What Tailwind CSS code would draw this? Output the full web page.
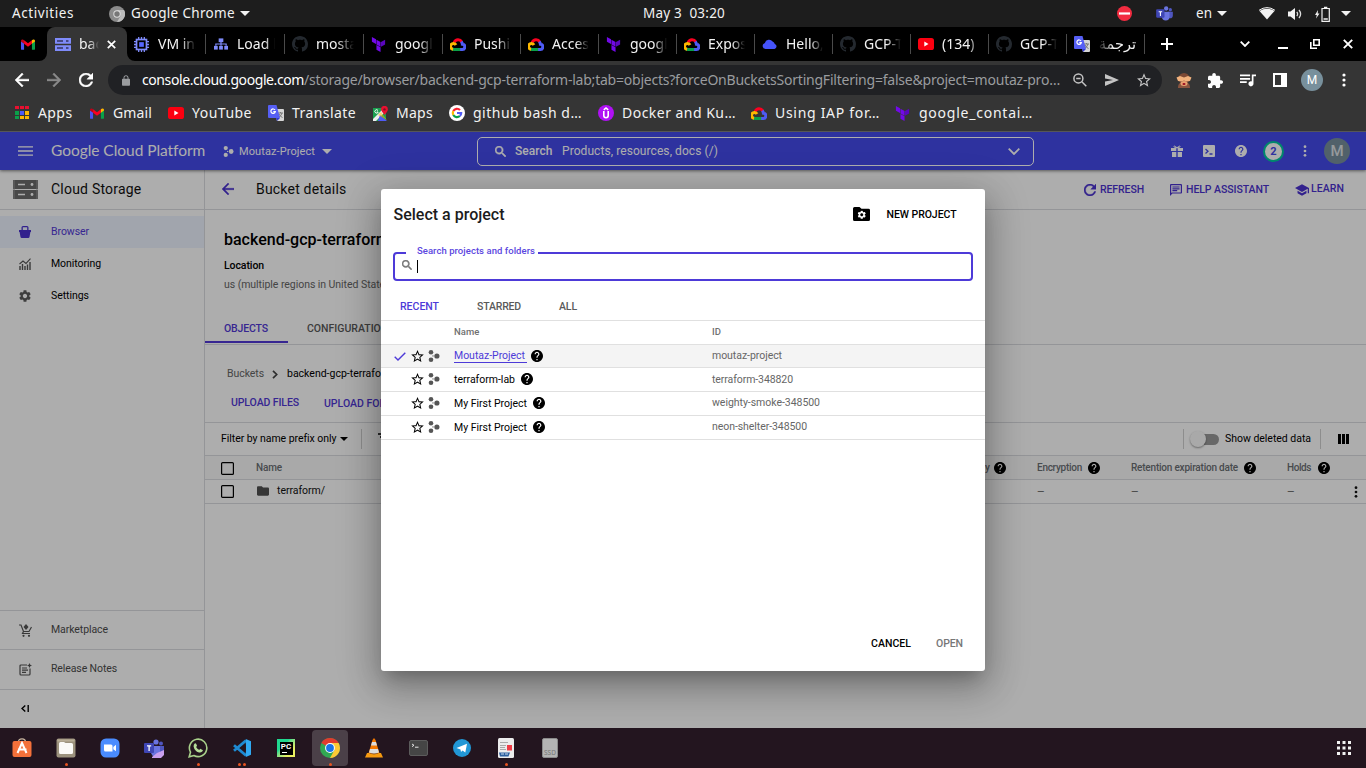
<!DOCTYPE html>
<html lang="en">
<head>
<meta charset="utf-8">
<title>Select a project</title>
<script src="https://cdn.jsdelivr.net/npm/@tailwindcss/browser@4"></script>
</head>
<body class="w-[1366px] h-[768px] overflow-hidden bg-black whitespace-nowrap">
<svg width="0" height="0" class="absolute">
  <symbol id="help" viewBox="2 2 20 20"><path fill="currentColor" d="M12 2C6.48 2 2 6.48 2 12s4.48 10 10 10 10-4.48 10-10S17.52 2 12 2zm1 17h-2v-2h2v2zm2.07-7.75l-.9.92C13.45 12.9 13 13.5 13 15h-2v-.5c0-1.1.45-2.1 1.17-2.83l1.24-1.26c.37-.36.59-.86.59-1.41 0-1.1-.9-2-2-2s-2 .9-2 2H8c0-2.21 1.79-4 4-4s4 1.79 4 4c0 .88-.36 1.68-.93 2.25z"/></symbol>
  <symbol id="star" viewBox="2 2 20 19"><path fill="currentColor" d="M22 9.24l-7.19-.62L12 2 9.19 8.63 2 9.24l5.46 4.73L5.82 21 12 17.27 18.18 21l-1.63-7.03L22 9.24zM12 15.4l-3.76 2.27 1-4.28-3.32-2.88 4.38-.38L12 6.1l1.71 4.04 4.38.38-3.32 2.88 1 4.28L12 15.4z"/></symbol>
  <symbol id="gear" viewBox="2 2 20 20"><path fill="currentColor" d="M19.14 12.94c.04-.3.06-.61.06-.94 0-.32-.02-.64-.07-.94l2.03-1.58c.18-.14.23-.41.12-.61l-1.92-3.32c-.12-.22-.37-.29-.59-.22l-2.39.96c-.5-.38-1.03-.7-1.62-.94l-.36-2.54c-.04-.24-.24-.41-.48-.41h-3.84c-.24 0-.43.17-.47.41l-.36 2.54c-.59.24-1.13.57-1.62.94l-2.39-.96c-.22-.08-.47 0-.59.22L2.74 8.87c-.12.21-.08.47.12.61l2.03 1.58c-.05.3-.09.63-.09.94s.02.64.07.94l-2.03 1.58c-.18.14-.23.41-.12.61l1.92 3.32c.12.22.37.29.59.22l2.39-.96c.5.38 1.03.7 1.62.94l.36 2.54c.05.24.24.41.48.41h3.84c.24 0 .44-.17.47-.41l.36-2.54c.59-.24 1.13-.56 1.62-.94l2.39.96c.22.08.47 0 .59-.22l1.92-3.32c.12-.22.07-.47-.12-.61l-2.01-1.58zM12 15.6c-1.98 0-3.6-1.62-3.6-3.6s1.62-3.6 3.6-3.6 3.6 1.62 3.6 3.6-1.62 3.6-3.6 3.6z"/></symbol>
  <symbol id="search" viewBox="3 3 17.5 17.5"><path fill="currentColor" stroke="currentColor" stroke-width=".9" d="M15.5 14h-.79l-.28-.27C15.41 12.59 16 11.11 16 9.5 16 5.91 13.09 3 9.5 3S3 5.91 3 9.5 5.91 16 9.5 16c1.61 0 3.09-.59 4.23-1.57l.27.28v.79l5 4.99L20.49 19l-4.99-5zm-6 0C7.01 14 5 11.99 5 9.5S7.01 5 9.5 5 14 7.01 14 9.5 11.99 14 9.5 14z"/></symbol>
  <symbol id="back" viewBox="4 4 16 16"><path fill="currentColor" stroke="currentColor" stroke-width=".5" d="M20 11H7.83l5.59-5.59L12 4l-8 8 8 8 1.41-1.41L7.83 13H20v-2z"/></symbol>
  <symbol id="reload" viewBox="4 4 16 16"><path fill="currentColor" stroke="currentColor" stroke-width=".5" d="M17.65 6.35C16.2 4.9 14.21 4 12 4c-4.42 0-7.99 3.58-7.99 8s3.57 8 7.99 8c3.73 0 6.84-2.55 7.73-6h-2.08c-.82 2.33-3.04 4-5.65 4-3.31 0-6-2.69-6-6s2.69-6 6-6c1.66 0 3.14.69 4.22 1.78L13 11h7V4l-2.35 2.35z"/></symbol>
  <symbol id="folder" viewBox="2 4 20 16"><path fill="currentColor" d="M10 4H4c-1.1 0-1.99.9-1.99 2L2 18c0 1.1.9 2 2 2h16c1.1 0 2-.9 2-2V8c0-1.1-.9-2-2-2h-8l-2-2z"/></symbol>
  <symbol id="tri" viewBox="0 0 10 5"><path fill="currentColor" d="M0 0h10L5 5z"/></symbol>
  <symbol id="project" viewBox="0 0 12 12"><g fill="currentColor"><circle cx="3" cy="2.3" r="2.300"/><circle cx="3" cy="9.700" r="2.300"/><circle cx="8.900" cy="6" r="2.600"/><circle cx="5" cy="5.900" r=".7"/></g></symbol>
  <symbol id="github" viewBox="0 0 16 16"><path fill="#24292f" d="M8 0C3.58 0 0 3.58 0 8c0 3.54 2.29 6.53 5.47 7.59.4.07.55-.17.55-.38 0-.19-.01-.82-.01-1.49-2.01.37-2.53-.49-2.69-.94-.09-.23-.48-.94-.82-1.13-.28-.15-.68-.52-.01-.53.63-.01 1.08.58 1.23.82.72 1.21 1.87.87 2.33.66.07-.52.28-.87.51-1.07-1.78-.2-3.64-.89-3.64-3.95 0-.87.31-1.59.82-2.15-.08-.2-.36-1.02.08-2.12 0 0 .67-.21 2.2.82.64-.18 1.32-.27 2-.27.68 0 1.36.09 2 .27 1.53-1.04 2.2-.82 2.2-.82.44 1.1.16 1.92.08 2.12.51.56.82 1.27.82 2.15 0 3.07-1.87 3.75-3.65 3.95.29.25.54.73.54 1.48 0 1.07-.01 1.93-.01 2.2 0 .21.15.46.55.38A8.013 8.013 0 0016 8c0-4.42-3.58-8-8-8z"/></symbol>
  <symbol id="terraform" viewBox="0 0 24 24"><path fill="#7209e8" d="M1.44 0v7.575l6.561 3.79V3.787zM8.72 4.23v7.575l6.561 3.787V8.018zm0 8.405v7.575L15.28 24v-7.578z"/><path fill="#5a06bd" d="M22.56 4.227l-6.561 3.791v7.574l6.56-3.787z"/></symbol>
  <symbol id="gmail" viewBox="0 0 16 12"><path fill="#4a52f0" d="M0 2l3.500 2.600V12H1a1 1 0 0 1-1-1z"/><path fill="#0aa04a" d="M12.500 4.600L16 2v9a1 1 0 0 1-1 1h-2.500z"/><path fill="#fb0020" d="M3.500 1L8 4.500 12.500 1v4.200L8 8.600 3.500 5.200z"/><path fill="#c00018" d="M0 2C0 .3 2-.2 3.500 1v4.200L0 2.600z"/><path fill="#fdb800" d="M16 2C16 .3 14-.2 12.500 1v4.200L16 2.600z"/></symbol>
  <symbol id="gcp" viewBox="0 0 16 13"><g fill="none" stroke-width="3"><path stroke="#fb0020" d="M4.200 4.300A4.300 4.300 0 0 1 11.800 4"/><path stroke="#4f5bf5" d="M11.300 3.600Q12.400 5 12.400 6.200A2.600 2.600 0 0 1 12 11.400H9.500"/><path stroke="#0aa04a" d="M10.200 11.400H4Q3 11.400 2.400 10.900"/><path stroke="#fdb800" d="M3.100 11.200A2.900 2.900 0 1 1 6 7"/></g></symbol>
  <symbol id="youtube" viewBox="0 0 16 12"><rect width="16" height="12" rx="2.600" fill="#fb0010"/><path fill="#fff" d="M6.300 3.500v5L10.500 6z"/></symbol>
  <symbol id="translate" viewBox="0 0 16 16"><path fill="#d5d5d5" d="M6 4h9a1 1 0 0 1 1 1v10a1 1 0 0 1-1 1H9z"/><path stroke="#777" fill="none" d="M10 8h5M12.500 7v1M14 8q-.8 3-3.500 4.500M11 9q1 2.500 3.500 3.500"/><path fill="#565ff5" d="M1 0h7.500L12 13H1a1 1 0 0 1-1-1V1a1 1 0 0 1 1-1z"/><path fill="#343bd0" d="M8 13h4l-3 3z"/><path stroke="#fff" fill="none" stroke-width="1.200" d="M7 5A2.200 2.200 0 1 0 7.300 6.600H5.300"/></symbol>
  <symbol id="teams" viewBox="0 0 20 18"><circle cx="12" cy="3" r="2.600" fill="#6a74e0"/><circle cx="17" cy="4.500" r="2" fill="#4f56c0"/><path fill="#4f56c0" d="M14 7h6v5a3 3 0 0 1-5 2z"/><path fill="#6a74e0" d="M7 7h9v6a4.500 4.500 0 0 1-9 0z"/><rect y="4" width="10" height="10" rx="1" fill="#3f46b4"/><path d="M3 6.800h4.200M5.100 7v5" stroke="#fff" stroke-width="1.300"/></symbol>
  <symbol id="chk" viewBox="0 0 13 13"><rect x=".6" y=".6" width="11.800" height="11.800" rx="1" fill="none" stroke="currentColor" stroke-width="1.200"/></symbol>
  <symbol id="kebab" viewBox="0 0 4 14"><g fill="currentColor"><circle cx="2" cy="2" r="1.600"/><circle cx="2" cy="7" r="1.600"/><circle cx="2" cy="12" r="1.600"/></g></symbol>
</svg>

<div class="relative flex flex-col w-[1366px] h-[768px] font-['Noto_Sans',sans-serif] text-[#f2f2f2]">

  <!-- desktop top bar -->
  <div class="flex items-center h-[27px] bg-[#1d1d1d] text-[13.500px] leading-none">
    <div class="pl-3 w-[109px]"><span data-w="62">Activities</span></div>
    <div class="w-[22px]"><svg class="size-4" viewBox="0 0 16 16"><circle cx="8" cy="8" r="8" fill="#8b8b8b"/><path d="M8 4h7A8 8 0 0 1 8 16l3.500-6z" fill="#bdbdbd"/><circle cx="8" cy="8" r="3.700" fill="#ddd"/><circle cx="8" cy="8" r="2.700" fill="#777"/></svg></div>
    <div class="w-[109px]"><span data-w="104">Google Chrome</span></div>
    <svg class="w-[10px] h-[5px]"><use href="#tri"/></svg>
    <div class="ml-[393px] w-[474px] whitespace-pre"><span data-w="82">May 3  03:20</span></div>
    <div class="w-[39px]"><svg class="size-[15px]" viewBox="0 0 15 15"><circle cx="7.500" cy="7.500" r="7.500" fill="#f22c40"/><path d="M2 7.500h11" stroke="#fff" stroke-width="2.200"/></svg></div>
    <div class="w-[40px]"><svg class="w-[17px] h-[15px]"><use href="#teams"/></svg></div>
    <div class="w-[21px]"><span data-w="16">en</span></div>
    <div class="w-[42px]"><svg class="w-[10px] h-[5px]"><use href="#tri"/></svg></div>
    <div class="w-[29px]"><svg class="w-4 h-[13px]" viewBox="0 0 16 13"><path fill="#f2f2f2" d="M.5 4L8 12.500 15.500 4Q12 1.800 8 1.800T.5 4z"/><path d="M0 3.300Q4 .6 8 .6t8 2.700" stroke="#f2f2f2" fill="none"/></svg></div>
    <div class="w-[27px]"><svg class="w-[14px] h-[14px]" viewBox="0 0 14 14"><path fill="#f2f2f2" d="M0 4.500h2.500L7 1v12L2.500 9.500H0z"/><path d="M8.800 4.800q1.600 2.200 0 4.400M11 3q3.200 4 0 8" fill="none" stroke="#ddd" stroke-width="1.300"/></svg></div>
    <div class="w-[26px]"><svg class="w-[16px] h-[16px]" viewBox="0 0 16 16"><path fill="#f2f2f2" d="M3 4L0 9h1.800L1 12.500 4.500 7.500H2.700z"/><path d="M7 2.500h7.300v12.800H7zM9 1.300h3.300" fill="none" stroke="#f2f2f2" stroke-width="1.200"/><path d="M8.500 13h4.300" stroke="#f2f2f2" stroke-width="1.500"/></svg></div>
    <svg class="w-[10px] h-[5px]"><use href="#tri"/></svg>
  </div>

  <!-- browser tabs -->
  <div class="flex items-center h-[34px] bg-black text-[14px] leading-none">
    <div class="w-[47px] pl-[21px]"><svg class="w-[14px] h-[11px]"><use href="#gmail"/></svg></div>
    <div class="relative flex items-center w-20 h-full bg-[#353535] rounded-t-lg pl-2">
      <svg class="absolute -left-2 bottom-0 size-2" viewBox="0 0 8 8"><path fill="#353535" d="M8 0v8H0a8 8 0 0 0 8-8z"/></svg>
      <svg class="absolute -right-2 bottom-0 size-2" viewBox="0 0 8 8"><path fill="#353535" d="M0 0v8h8a8 8 0 0 1-8-8z"/></svg>
      <svg class="w-4 h-[13px]" viewBox="0 0 16 13"><path fill="#7f8bfa" d="M0 0h16v5.800H0zM0 7.200h16V13H0z"/><path d="M2 3h6M2 10h6M11 3h2.500M11 10h2.500" stroke="#353560" stroke-width="1.400"/></svg>
      <div class="ml-2 w-[20px] overflow-hidden leading-5 [mask-image:linear-gradient(to_right,#000_50%,transparent)]">backend</div>
      <svg class="ml-2 size-[9px]" viewBox="0 0 9 9"><path d="M.8.8l7.400 7.400M8.200.8L.8 8.200" stroke="#fff" stroke-width="1.700"/></svg>
    </div>
    <div class="flex items-center w-[79px] h-5 border-r border-[#4a4a4a] pl-[7px]"><svg class="size-[15px]" viewBox="0 0 16 16"><g fill="none" stroke="#7f8bfa"><rect x="2.700" y="2.700" width="10.600" height="10.600" stroke-width="1.800"/><path stroke-width="1.400" d="M5 0v3M8 0v3M11 0v3M5 13v3M8 13v3M11 13v3M0 5h3M0 8h3M0 11h3M13 5h3M13 8h3M13 11h3"/></g><rect x="5.500" y="5.500" width="5" height="5" fill="#5566ff"/></svg><div class="ml-[9px] w-[38px] overflow-hidden leading-5 [mask-image:linear-gradient(to_right,#000_60%,transparent)]">VM instances</div></div>
    <div class="flex items-center w-[79px] h-5 border-r border-[#4a4a4a] pl-[8px]"><svg class="w-[14px] h-3" viewBox="0 0 15 12"><g fill="#7f8bfa"><rect x="5" width="5" height="4"/><rect y="8" width="4" height="4"/><rect x="5.500" y="8" width="4" height="4"/><rect x="11" y="8" width="4" height="4"/></g><path d="M7.500 3v5M2 8V6h11v2" fill="none" stroke="#7f8bfa" stroke-width="1.300"/></svg><div class="ml-[9px] w-[38px] overflow-hidden leading-5 [mask-image:linear-gradient(to_right,#000_75%,transparent)]">Load balancing</div></div>
    <div class="flex items-center w-[79px] h-5 border-r border-[#4a4a4a] pl-[7px]"><svg class="size-4"><use href="#github"/></svg><div class="ml-2 w-[38px] overflow-hidden leading-5 [mask-image:linear-gradient(to_right,#000_55%,transparent)]">mostafa</div></div>
    <div class="flex items-center w-[79px] h-5 border-r border-[#4a4a4a] pl-[7px]"><svg class="size-[15px]"><use href="#terraform"/></svg><div class="ml-[9px] w-[38px] overflow-hidden leading-5 [mask-image:linear-gradient(to_right,#000_65%,transparent)]">google_con</div></div>
    <div class="flex items-center w-[78px] h-5 border-r border-[#4a4a4a] pl-[7px]"><svg class="w-4 h-[13px]"><use href="#gcp"/></svg><div class="ml-2 w-[37px] overflow-hidden leading-5 [mask-image:linear-gradient(to_right,#000_65%,transparent)]">Pushing</div></div>
    <div class="flex items-center w-[78px] h-5 border-r border-[#4a4a4a] pl-[7px]"><svg class="w-4 h-[13px]"><use href="#gcp"/></svg><div class="ml-2 w-[37px] overflow-hidden leading-5 [mask-image:linear-gradient(to_right,#000_65%,transparent)]">Access</div></div>
    <div class="flex items-center w-[78px] h-5 border-r border-[#4a4a4a] pl-[7px]"><svg class="size-[15px]"><use href="#terraform"/></svg><div class="ml-[9px] w-[37px] overflow-hidden leading-5 [mask-image:linear-gradient(to_right,#000_65%,transparent)]">google_con</div></div>
    <div class="flex items-center w-[78px] h-5 border-r border-[#4a4a4a] pl-[7px]"><svg class="w-4 h-[13px]"><use href="#gcp"/></svg><div class="ml-2 w-[37px] overflow-hidden leading-5 [mask-image:linear-gradient(to_right,#000_65%,transparent)]">Exposing</div></div>
    <div class="flex items-center w-[78px] h-5 border-r border-[#4a4a4a] pl-[7px]"><svg class="w-4 h-[10px]" viewBox="0 0 16 10"><path fill="#4553fa" d="M3.500 10a3 3 0 0 1-.6-5.900 4.300 4.300 0 0 1 7.700-1.500 3.600 3.600 0 0 1 2.200 2.400 2.600 2.600 0 0 1-.3 5z"/></svg><div class="ml-2 w-[37px] overflow-hidden leading-5 [mask-image:linear-gradient(to_right,#000_65%,transparent)]">Hello, Wo</div></div>
    <div class="flex items-center w-[78px] h-5 border-r border-[#4a4a4a] pl-[7px]"><svg class="size-4"><use href="#github"/></svg><div class="ml-2 w-[37px] overflow-hidden leading-5 [mask-image:linear-gradient(to_right,#000_60%,transparent)]">GCP-Terra</div></div>
    <div class="flex items-center w-[78px] h-5 border-r border-[#4a4a4a] pl-[7px]"><svg class="w-4 h-3"><use href="#youtube"/></svg><div class="ml-2 w-[37px] overflow-hidden leading-5 [mask-image:linear-gradient(to_right,#000_75%,transparent)]">(134) Go</div></div>
    <div class="flex items-center w-[78px] h-5 border-r border-[#4a4a4a] pl-[7px]"><svg class="size-4"><use href="#github"/></svg><div class="ml-2 w-[37px] overflow-hidden leading-5 [mask-image:linear-gradient(to_right,#000_60%,transparent)]">GCP-Terra</div></div>
    <div class="flex items-center w-[78px] h-5 border-r border-[#4a4a4a] pl-[7px]"><svg class="size-4"><use href="#translate"/></svg><div dir="rtl" class="ml-2 w-[38px] overflow-hidden leading-5 text-[14.500px] font-['DejaVu_Sans',sans-serif] [mask-image:linear-gradient(to_left,#000_60%,transparent)]">ترجمة</div></div>
    <svg class="ml-[16px] size-3" viewBox="0 0 12 12"><path d="M6 0v12M0 6h12" stroke="#fff" stroke-width="2"/></svg>
    <svg class="ml-[67px] w-[10px] h-[6px]" viewBox="0 0 10 6"><path d="M.7.7L5 5 9.300.7" fill="none" stroke="#fff" stroke-width="1.800"/></svg>
    <svg class="ml-[28px] mt-2 w-[10px] h-[2px]" viewBox="0 0 10 2"><path fill="#fff" d="M0 0h10v2H0z"/></svg>
    <svg class="ml-[22px] size-[10px]" viewBox="0 0 10 10"><path d="M3.800.8h5.400v5.400H3.800z" fill="none" stroke="#fff" stroke-width="1.600"/><path d="M.8 3v6.200H7" fill="none" stroke="#fff" stroke-width="1.600"/></svg>
    <svg class="ml-[23px] size-[10px]" viewBox="0 0 10 10"><path d="M.8.8l8.400 8.400M9.200.8L.8 9.200" stroke="#fff" stroke-width="1.900"/></svg>
  </div>

  <!-- address bar -->
  <div class="flex items-center h-[38px] bg-[#353535] pl-[15px] text-[14px] leading-none">
    <svg class="size-[14px] text-white"><use href="#back"/></svg>
    <svg class="ml-[18px] size-[14px] text-[#8a8a8a] rotate-180"><use href="#back"/></svg>
    <svg class="ml-[18px] size-[14px] text-white"><use href="#reload"/></svg>
    <div class="ml-[15px] flex items-center w-[1054px] h-[30px] rounded-full bg-[#202124] pl-[14px] text-[#9a9c9f]">
      <svg class="w-[8px] h-[11px]" viewBox="4 1 16 21"><path fill="currentColor" d="M18 8h-1V6c0-2.760-2.240-5-5-5S7 3.240 7 6v2H6c-1.100 0-2 .9-2 2v10c0 1.100.9 2 2 2h12c1.100 0 2-.9 2-2V10c0-1.100-.9-2-2-2zM15.100 8H8.900V6c0-1.710 1.390-3.100 3.100-3.100s3.100 1.390 3.100 3.100v2z"/></svg>
      <div class="ml-3 w-[931px] leading-5"><span class="text-white" data-w="162">console.cloud.google.com</span><span data-w="756">/storage/browser/backend-gcp-terraform-lab;tab=objects?forceOnBucketsSortingFiltering=false&amp;project=moutaz-pro…</span></div>
      <svg class="size-[14px] text-[#c4c4c4]" viewBox="0 0 14 14"><circle cx="5.400" cy="5.400" r="4.500" fill="none" stroke="currentColor" stroke-width="1.500"/><path d="M8.800 8.800l4.500 4.500M3.200 5.400h4.400" stroke="currentColor" stroke-width="1.500"/></svg>
      <svg class="ml-[18px] w-[14px] h-3 text-[#c4c4c4]" viewBox="0 0 14 12"><path fill="currentColor" d="M0 0l14 6L0 12V7.500L8 6 0 4.500z"/></svg>
      <svg class="ml-[18px] w-[14px] h-[14px] text-[#c4c4c4]"><use href="#star"/></svg>
    </div>
    <svg class="ml-[14px] w-4 h-4" viewBox="0 0 16 16"><circle cx="8" cy="6.500" r="5.500" fill="#7d4a35"/><path fill="#8a5540" d="M2 16q0-5 3-5h6q3 0 3 5z"/><path fill="#f2b27d" d="M.5 5.500L4 4l4 1.500L12 4l3.500 1.500L14 9l-4 .5L8 8.500 6 9.500 2 9z"/><ellipse cx="8" cy="11.500" rx="3.500" ry="2.500" fill="#e8a070"/><rect x="6.500" y="11" width="3" height="2" rx="1" fill="#a01525"/></svg>
    <svg class="ml-[16px] size-[15px]" viewBox="2 1 21 21"><path fill="#fff" d="M20.500 11H19V7c0-1.100-.9-2-2-2h-4V3.500C13 2.120 11.880 1 10.500 1S8 2.120 8 3.500V5H4c-1.100 0-1.990.9-1.990 2v3.800H3.500c1.490 0 2.700 1.210 2.700 2.700s-1.210 2.700-2.700 2.700H2V20c0 1.100.9 2 2 2h3.800v-1.500c0-1.490 1.210-2.700 2.700-2.700 1.490 0 2.700 1.210 2.700 2.700V22H17c1.100 0 2-.9 2-2v-4h1.500c1.380 0 2.500-1.120 2.500-2.500S21.880 11 20.500 11z"/></svg>
    <svg class="ml-[17px] w-4 h-[13px]" viewBox="3 6 19 14"><path fill="#fff" d="M15 6H3v2h12V6zm0 4H3v2h12v-2zM3 16h8v-2H3v2zM17 6v8.180c-.31-.11-.65-.18-1-.18-1.660 0-3 1.340-3 3s1.340 3 3 3 3-1.340 3-3V8h3V6h-5z"/></svg>
    <svg class="ml-[17px] size-[14px]" viewBox="0 0 14 14"><path fill="#fff" fill-rule="evenodd" d="M0 0h14v14H0zM2 2v10h6V2z"/></svg>
    <div class="ml-[14px] size-[22px] rounded-full bg-[#78909c] text-white text-[12px] flex items-center justify-center font-['Roboto',sans-serif]">M</div>
    <svg class="ml-[19px] w-1 h-[14px] text-white"><use href="#kebab"/></svg>
  </div>

  <!-- bookmarks -->
  <div class="flex items-center h-[33px] pb-[4px] bg-[#353535] border-b border-[#565656] pl-[15px] text-[14px] leading-none">
    <div class="w-[23px]"><svg class="size-[14px]" viewBox="0 0 14 14"><path fill="#e81030" d="M0 0h4v3H0zM5 0h4v3H5zM10 0h4v3h-4z"/><path fill="#0aa04a" d="M0 5h4v4H0zM0 10h4v3H0z"/><path fill="#4f5bf5" d="M5 5h4v4H5z"/><path fill="#fdb800" d="M10 5h4v4h-4zM5 10h4v3H5zM10 10h4v3h-4z"/></svg></div>
    <div class="w-[52px]"><span data-w="34.500">Apps</span></div>
    <div class="w-[23px]"><svg class="w-[14px] h-[11px]"><use href="#gmail"/></svg></div>
    <div class="w-[55px]"><span data-w="39">Gmail</span></div>
    <div class="w-6"><svg class="w-4 h-3"><use href="#youtube"/></svg></div>
    <div class="w-[76px]"><span data-w="60">YouTube</span></div>
    <div class="w-6"><svg class="size-4"><use href="#translate"/></svg></div>
    <div class="w-[81px]"><span data-w="64">Translate</span></div>
    <div class="w-[23px]"><svg class="w-[15px] h-[15px]" viewBox="0 0 15 15"><path fill="#1aa050" d="M0 2h13v13H0z"/><path fill="#eee" d="M0 13L11 2h2v3L3 15H0z"/><path fill="#4f5bf5" d="M7 9l7 6H5z"/><path fill="#fdb800" d="M5 9l3-3 6 8z" opacity=".5"/><path fill="#e81030" d="M11.500 9Q8 5 8 3.300a3.400 3.400 0 0 1 6.900 0Q15 5 11.500 9z"/><circle cx="11.500" cy="3.400" r="1.200" fill="#801020"/><path d="M5 4.500a1.700 1.700 0 1 0 .2 1.500H3.800" fill="none" stroke="#fff"/></svg></div>
    <div class="w-[53px]"><span data-w="37">Maps</span></div>
    <div class="w-6"><svg class="size-4" viewBox="0 0 16 16"><circle cx="8" cy="8" r="8" fill="#fff"/><g fill="none" stroke-width="2.200"><path stroke="#fb2030" d="M4.300 6A4.200 4.200 0 0 1 11 5"/><path stroke="#fdb800" d="M4.300 6a4.200 4.200 0 0 0 0 4"/><path stroke="#0aa04a" d="M4.300 10A4.200 4.200 0 0 0 10.800 11"/><path stroke="#4f5bf5" d="M8 8h4.200a4 4 0 0 1-1.400 3"/></g></svg></div>
    <div class="w-[125px]"><span data-w="109">github bash d…</span></div>
    <div class="w-6"><svg class="size-4" viewBox="0 0 16 16"><circle cx="8" cy="8" r="8" fill="#b010f5"/><path d="M5.800 6v4.500a2.200 2.200 0 0 0 4.400 0V6M5.800 4.800L8 3l2.200 1.800" fill="none" stroke="#fff" stroke-width="1.600"/></svg></div>
    <div class="w-[129px]"><span data-w="114">Docker and Ku…</span></div>
    <div class="w-6"><svg class="w-4 h-[13px]"><use href="#gcp"/></svg></div>
    <div class="w-[120px]"><span data-w="105">Using IAP for…</span></div>
    <div class="w-6"><svg class="size-[15px]"><use href="#terraform"/></svg></div>
    <div><span data-w="114">google_contai…</span></div>
  </div>

  <!-- web page -->
  <div class="relative flex flex-col h-[596px] bg-white text-black font-['Roboto',sans-serif] text-[10.500px] leading-none overflow-hidden">
    <div class="relative z-10 flex items-center h-[38px] shrink-0 bg-[#444aeb] text-white shadow-[0_1px_3px_rgba(0,0,0,0.5)] pl-[18px]">
      <svg class="w-[15px] h-[10px]" viewBox="0 0 15 10"><path d="M0 .8h15M0 5h15M0 9.200h15" stroke="#fff" stroke-width="1.300"/></svg>
      <div class="ml-[18px] w-[172px] text-[15.500px] font-['Lato',sans-serif]"><span data-w="154">Google Cloud Platform</span></div>
      <svg class="size-[11px]"><use href="#project"/></svg>
      <div class="ml-[5px] w-[83px] text-[11px]"><span data-w="76">Moutaz-Project</span></div>
      <svg class="w-[10px] h-[5px]"><use href="#tri"/></svg>
      <div class="ml-[145px] flex items-center w-[557px] h-[29px] border border-white rounded-[5px] pl-[17px] text-[12px]">
        <svg class="size-[11px]"><use href="#search"/></svg>
        <div class="ml-[9px] w-[47px] font-medium"><span data-w="37.500">Search</span></div>
        <div class="w-[446px]"><span data-w="156">Products, resources, docs (/)</span></div>
        <svg class="w-[12px] h-[7px]" viewBox="0 0 12 7"><path d="M.7.7L6 6 11.300.7" fill="none" stroke="#fff" stroke-width="1.800"/></svg>
      </div>
      <svg class="ml-[137px] size-3" viewBox="0 0 12 12"><path fill="#fff" d="M0 3h5.300v3H0zM6.700 3H12v3H6.700zM1 7h4.300v5H1zM6.700 7H11v5H6.700z"/><path d="M6 2.800Q3 3 3 1.500T6 2.800Q9 3 9 1.500T6 2.800z" fill="none" stroke="#fff"/></svg>
      <svg class="ml-[20px] size-3" viewBox="0 0 12 12"><rect width="12" height="12" rx="1" fill="#fff"/><path d="M2.500 4L5 6.200 2.500 8.500M6.500 9h3" fill="none" stroke="#444aeb" stroke-width="1.300"/></svg>
      <svg class="ml-[20px] size-3"><use href="#help"/></svg>
      <div class="ml-[16px] size-[21px] rounded-full border-2 border-[#00c8a0] bg-white text-[#444aeb] text-[11px] font-bold flex items-center justify-center">2</div>
      <svg class="ml-[19px] w-1 h-3"><use href="#kebab"/></svg>
      <div class="ml-[17px] size-[26px] rounded-full bg-[#78909c] flex items-center justify-center text-[15px] font-medium text-white/75">M</div>
    </div>
    <div class="flex h-[558px]">
      <!-- side navigation -->
      <div class="flex flex-col w-[205px] shrink-0 border-r border-[#dadce0]">
        <div class="flex items-center h-10 border-b border-[#dadce0] pl-[13px]">
          <svg class="w-[25px] h-[19px]" viewBox="0 0 25 19"><path fill="#6b6b6b" d="M0 0h25v9H0zM0 10h25v9H0z"/><path d="M5 4.500h7M5 14.500h7" stroke="#fff" stroke-width="1.600"/><circle cx="19" cy="4.500" r="1.400" fill="#fff"/><circle cx="19" cy="14.500" r="1.400" fill="#fff"/><path d="M1 0v19M24 0v19" stroke="#999"/></svg>
          <div class="ml-[13px] pb-[2px] text-[14px] text-[#111]"><span data-w="90.500">Cloud Storage</span></div>
        </div>
        <div class="mt-[6px] flex items-center h-8 bg-[#edf3ff] text-[#5238d6] pl-[19px]"><svg class="size-3" viewBox="0 0 12 12"><path fill="#4b32d0" d="M0 4h12v2h-.6L10.500 11q-.2 1-1.200 1H2.700q-1 0-1.200-1L.6 6H0zM2.500 4V1.500Q2.500 0 4 0h4q1.500 0 1.500 1.500V4H8.200V1.300H3.800V4z"/></svg><span class="ml-[20px]" data-w="38">Browser</span></div>
        <div class="flex items-center h-8 pl-[19px]"><svg class="size-3" viewBox="0 0 12 12"><path d="M.5 6l3.500-3 3 2.500L11.500.7" fill="none" stroke="#555" stroke-width="1.100"/><path d="M1 8v4M3.500 6v6M6 8v4M8.500 6.500V12M11 4v8" stroke="#555" stroke-width="1.400"/></svg><span class="ml-[20px]" data-w="50">Monitoring</span></div>
        <div class="flex items-center h-8 pl-[19px]"><svg class="size-3 text-[#5c5c5c]"><use href="#gear"/></svg><span class="ml-[20px]" data-w="38">Settings</span></div>
        <div class="mt-auto flex items-center h-[39px] border-t border-[#dadce0] pl-[19px] text-[#4c4c4c]"><svg class="size-[13px]" viewBox="0 0 13 13"><path d="M0 1h2l2.500 6.500h5.500L12.500 3M4.500 7.500L3.500 9.500h7.500" fill="none" stroke="#555" stroke-width="1.200"/><circle cx="4.500" cy="11.800" r="1.100" fill="#555"/><circle cx="10" cy="11.800" r="1.100" fill="#555"/><path fill="#555" d="M7 0l2.500 3L7 6 4.500 3z"/></svg><span class="ml-[19px]" data-w="57">Marketplace</span></div>
        <div class="flex items-center h-[40px] border-t border-[#dadce0] pl-[19px] text-[#4c4c4c]"><svg class="size-[13px]" viewBox="0 0 13 13"><path d="M8 2H2Q1 2 1 3v8q0 1 1 1h8q1 0 1-1V5.500M3 5h5M3 7.200h6M3 9.400h4" fill="none" stroke="#555" stroke-width="1.200"/><path fill="#555" d="M10.500 0l.8 1.700 1.700.8-1.700.8-.8 1.700-.8-1.700L8 2.500l1.700-.8z"/></svg><span class="ml-[19px]" data-w="66">Release Notes</span></div>
        <div class="flex items-center h-[39px] border-t border-[#dadce0] pl-[21px] pb-[2px]"><svg class="w-2 h-[7px]" viewBox="0 0 8 7"><path d="M4.300.5L1 3.500l3.300 3M7.200 0v7" fill="none" stroke="#000" stroke-width="1.400"/></svg></div>
      </div>
      <!-- bucket details -->
      <div class="flex flex-col w-[1161px]">
        <div class="flex items-center h-10 border-b border-[#dadce0] pl-[17px] text-[#4b32d0] font-medium shrink-0">
          <svg class="size-3 mb-[2px]"><use href="#back"/></svg>
          <div class="ml-[22px] pb-[2px] w-[828px] text-[14px] font-normal text-[#111]"><span data-w="90.500">Bucket details</span></div>
          <svg class="size-3"><use href="#reload"/></svg><div class="ml-1 w-[70px] pt-[1px]"><span data-w="44">REFRESH</span></div>
          <svg class="size-3" viewBox="2 2 20 20"><path fill="currentColor" d="M4 4h16v12H5.170L4 17.170V4m0-2c-1.100 0-1.990.9-1.990 2L2 22l4-4h14c1.100 0 2-.9 2-2V4c0-1.100-.9-2-2-2H4zm2 10h8v2H6v-2zm0-3h12v2H6V9zm0-3h12v2H6V6z"/></svg><div class="ml-1 w-[109px] pt-[1px]"><span data-w="83">HELP ASSISTANT</span></div>
          <svg class="w-[14px] h-3" viewBox="1 3 22 18"><path fill="currentColor" d="M5 13.180v4L12 21l7-3.820v-4L12 17l-7-3.820zM12 3L1 9l11 6 9-4.910V17h2V9L12 3z"/></svg><span class="ml-[2px] pb-[1px]" data-w="33">LEARN</span>
        </div>
        <div class="pl-[19px] pt-[22px] h-[98px] shrink-0">
          <div class="text-[16px] font-medium"><span>backend-gcp-terraform-lab</span></div>
          <div class="mt-[13px] font-medium"><span data-w="40">Location</span></div>
          <div class="mt-[8px] text-[#666]"><span class="tracking-[-.05px]">us (multiple regions in United States)</span></div>
        </div>
        <div class="flex h-[37px] border-b border-[#dadce0] font-medium text-[#5a5a5a] leading-[43px] shrink-0">
          <div class="w-[83px] h-[36px] border-b-2 border-[#5238d6] pl-[19px] text-[#5238d6] -mt-[1px]"><span data-w="44">OBJECTS</span></div>
          <div class="pl-[19px] -mt-[1px]"><span>CONFIGURATION</span></div>
        </div>
        <div class="flex items-center h-[57px] pt-[1px] pl-[22px] shrink-0"><span class="text-[#666]" data-w="37">Buckets</span><svg class="ml-2 w-[6px] h-[9px]" viewBox="0 0 6 9"><path d="M1 .8l3.700 3.700L1 8.200" fill="none" stroke="#444" stroke-width="1.700"/></svg><span class="ml-[9px]">backend-gcp-terraform-lab</span></div>
        <div class="flex h-[21px] pl-[26px] font-medium text-[#5238d6] border-b border-[#dadce0] shrink-0"><div class="w-[93px] -mt-[4px]"><span data-w="68">UPLOAD FILES</span></div><span class="-mt-[3px]">UPLOAD FOLDER</span></div>
        <div class="flex items-center h-[33px] pl-4 border-b border-[#dadce0] shrink-0">
          <div class="w-[119px]"><span data-w="115">Filter by name prefix only</span></div>
          <svg class="w-[8px] h-[4px]"><use href="#tri"/></svg>
          <div class="ml-[13px] w-px h-5 bg-[#d0d0d0]"></div>
          <svg class="ml-4 mb-1 w-3 h-2" viewBox="0 0 12 8"><path d="M0 1h12M2 4h8M4.500 7h3" stroke="#000" stroke-width="1.500"/></svg>
          <div class="ml-[793px] w-px h-5 bg-[#d0d0d0]"></div>
          <div class="ml-[6px] flex items-center"><div class="size-[16px] rounded-full bg-[#fafafa] shadow-[0_1px_2px_rgba(0,0,0,0.4)] z-10"></div><div class="-ml-[7px] w-5 h-[11px] rounded-full bg-[#9a9a9a]"></div></div>
          <div class="ml-[6px] w-[95px]"><span data-w="86">Show deleted data</span></div>
          <div class="w-px h-5 bg-[#d0d0d0]"></div>
          <svg class="ml-[17px] w-[11px] h-[10px]" viewBox="0 0 11 10"><path fill="#000" d="M0 0h3v10H0zM4 0h3v10H4zM8 0h3v10H8z"/></svg>
        </div>
        <div class="flex items-center h-6 pl-4 border-b border-[#dadce0] bg-[#fafafa] text-[#6b6f74] font-medium text-[10px] shrink-0">
          <svg class="size-[13px] text-black mt-px"><use href="#chk"/></svg><div class="ml-[22px] w-[722px]"><span data-w="26">Name</span></div>
          <div class="w-[16px] text-right pr-1">y</div><svg class="size-3 text-black"><use href="#help"/></svg>
          <div class="ml-[31px] w-[51px]"><span data-w="45">Encryption</span></div><svg class="size-3 text-black"><use href="#help"/></svg>
          <div class="ml-[31px] w-[113px]"><span data-w="107">Retention expiration date</span></div><svg class="size-3 text-black"><use href="#help"/></svg>
          <div class="ml-[31px] w-[31px]"><span data-w="24">Holds</span></div><svg class="size-3 text-black"><use href="#help"/></svg>
        </div>
        <div class="flex items-center h-6 pl-4 border-b border-[#dadce0] text-[#111] shrink-0">
          <svg class="size-[13px] text-black"><use href="#chk"/></svg><svg class="ml-[23px] mb-[2px] w-3 h-[10px] text-[#505050]"><use href="#folder"/></svg>
          <div class="ml-2 w-[760px] pb-px"><span data-w="48">terraform/</span></div>
          <div class="w-[94px] text-[#444] text-[9.500px]">—</div><div class="w-[156px] text-[#444] text-[9.500px]">—</div><div class="w-[67px] text-[#444] text-[9.500px]">—</div>
          <svg class="w-1 h-3"><use href="#kebab"/></svg>
        </div>
      </div>
    </div>

    <!-- dimmed backdrop and dialog -->
    <div class="absolute inset-0 z-20 bg-black/32"></div>
    <div class="absolute z-30 left-[381px] top-[57px] w-[604px] h-[482px] rounded-[3px] bg-white shadow-[0_11px_15px_-7px_rgba(0,0,0,.2),0_14px_34px_3px_rgba(0,0,0,.2),0_9px_42px_8px_rgba(0,0,0,.14)] flex flex-col">
      <div class="flex items-center h-[50px] pl-[12.500px] pt-px shrink-0">
        <div class="w-[459px] text-[16px] font-medium text-[#1c1c1c]"><span data-w="111">Select a project</span></div>
        <svg class="mb-px w-[17px] h-[14px]" viewBox="0 0 17 14"><path fill="#000" d="M1.500 0h5l2 1.800h7q1.500 0 1.500 1.400v9.300q0 1.500-1.500 1.500h-14Q0 14 0 12.500v-11Q0 0 1.500 0z"/><g color="#fff"><use href="#gear" x="4.500" y="3.500" width="8.500" height="8.500"/></g></svg>
        <div class="ml-[17px] pt-[1px] font-medium"><span data-w="70">NEW PROJECT</span></div>
      </div>
      <div class="relative mt-[13px] ml-3 flex items-center w-[580px] h-[29px] border-2 border-[#4d3ad8] rounded-[4px] pl-[7px] shrink-0">
        <div class="absolute left-[11px] -top-[9px] w-[132px] h-[12px] bg-white pl-[11px] pt-px text-[9.500px] font-medium text-[#5b47e0]"><span data-w="118">Search projects and folders</span></div>
        <svg class="size-[10px] mb-[3px] text-[#777]"><use href="#search"/></svg><div class="ml-[5px] w-px h-[13px] bg-black"></div>
      </div>
      <div class="flex items-center h-[40px] pt-[13px] pl-[19px] border-b border-[#e0e0e0] text-[#5a5a5a] font-medium shrink-0">
        <div class="w-[77px] text-[#4d3ad8]"><span data-w="39">RECENT</span></div><div class="w-[82px]"><span data-w="44">STARRED</span></div><span data-w="18">ALL</span>
      </div>
      <div class="flex items-center h-6 pb-[2px] pl-[73px] border-b border-[#e0e0e0] text-[#707070] font-medium text-[9.500px] shrink-0"><div class="w-[258px]"><span data-w="25.500">Name</span></div><span data-w="9">ID</span></div>
      <div class="flex items-center h-[23px] pl-[13px] border-b border-[#e0e0e0] bg-[#f4f4f4] shrink-0">
        <svg class="w-3 h-[9px]" viewBox="0 0 12 9"><path d="M.7 4.800L4 8 11.300.7" fill="none" stroke="#4d3ad8" stroke-width="1.400"/></svg>
        <svg class="ml-[5px] w-[13px] h-[12px]"><use href="#star"/></svg><svg class="ml-[4px] size-3 text-[#555]"><use href="#project"/></svg>
        <div class="ml-[14px] flex w-[258px] items-center"><span class="text-[#4d3ad8] border-b border-[#4d3ad8] pt-[2px] pb-[1px] w-[73px] h-[14px]"><span data-w="71">Moutaz-Project</span></span><svg class="ml-[4px] size-3"><use href="#help"/></svg></div>
        <span class="text-[#666]" data-w="70">moutaz-project</span>
      </div>
      <div class="flex items-center h-6 pl-[30px] pb-px border-b border-[#e0e0e0] shrink-0">
        <svg class="w-[13px] h-[12px]"><use href="#star"/></svg><svg class="ml-[4px] size-3 text-[#555]"><use href="#project"/></svg>
        <div class="ml-[14px] flex w-[258px] h-3 items-center"><span class="pt-[2px]" data-w="61">terraform-lab</span><svg class="ml-[6px] size-3"><use href="#help"/></svg></div>
        <span class="text-[#666] pt-[2px]" data-w="81">terraform-348820</span>
      </div>
      <div class="flex items-center h-6 pl-[30px] pb-px border-b border-[#e0e0e0] shrink-0">
        <svg class="w-[13px] h-[12px]"><use href="#star"/></svg><svg class="ml-[4px] size-3 text-[#555]"><use href="#project"/></svg>
        <div class="ml-[14px] flex w-[258px] h-3 items-center"><span class="pt-[2px]" data-w="73">My First Project</span><svg class="ml-[6px] size-3"><use href="#help"/></svg></div>
        <span class="text-[#666] pt-px" data-w="108">weighty-smoke-348500</span>
      </div>
      <div class="flex items-center h-6 pl-[30px] pb-px border-b border-[#e0e0e0] shrink-0">
        <svg class="w-[13px] h-[12px]"><use href="#star"/></svg><svg class="ml-[4px] size-3 text-[#555]"><use href="#project"/></svg>
        <div class="ml-[14px] flex w-[258px] h-3 items-center"><span class="pt-[2px]" data-w="73">My First Project</span><svg class="ml-[6px] size-3"><use href="#help"/></svg></div>
        <span class="text-[#666] pt-px" data-w="95">neon-shelter-348500</span>
      </div>
      <div class="mt-auto flex justify-end items-center h-[53px] pr-[22px] font-medium"><span data-w="40">CANCEL</span><span class="ml-[25px] text-[#777]" data-w="27">OPEN</span></div>
    </div>
  </div>

  <!-- dock -->
  <div class="flex items-center h-10 bg-[#23151f] pr-[15px]">
    <div class="relative flex items-center justify-center w-11 h-10"><svg class="size-5" viewBox="0 0 20 20"><path d="M6.500 4Q6.500.8 10 .8T13.500 4" fill="none" stroke="#c9b7a0" stroke-width="1.300"/><rect x=".5" y="3" width="19" height="16" rx="2" fill="#f4713a"/><path d="M5.500 15L10 5l4.500 10M6 11.500h8.500" fill="none" stroke="#fff" stroke-width="2"/></svg></div>
    <div class="relative flex items-center justify-center w-11 h-10"><svg class="size-5" viewBox="0 0 20 20"><rect x=".5" y=".5" width="19" height="19" rx="2" fill="#9c927d"/><rect x="1.500" y="1.500" width="17" height="2" fill="#b9ae97"/><path fill="#fbfaf7" d="M3 5.500Q3 4 4.500 4H8l1.500 1h6Q17 5 17 6.500v8q0 1.500-1.500 1.500h-11Q3 16 3 14.500z"/></svg><i class="absolute bottom-[2px] size-[3px] rounded-full bg-[#e95420]"></i></div>
    <div class="relative flex items-center justify-center w-11 h-10"><svg class="size-5" viewBox="0 0 20 20"><rect x=".5" y=".5" width="19" height="19" rx="5.500" fill="#4a8cff"/><path fill="#fff" d="M4 6.500h7q1.500 0 1.500 1.500v5.500h-7Q4 13.500 4 12zM13.300 9L16 6.800v6.500l-2.700-2z"/></svg></div>
    <div class="relative flex items-center justify-center w-11 h-10"><svg class="w-5 h-[18px]"><use href="#teams"/></svg><svg class="absolute right-[12px] bottom-[10px] w-3 h-2" viewBox="0 0 12 8"><path fill="#caa0ee" d="M0 7l5-4 7-3v5l-3 3H0z"/></svg></div>
    <div class="relative flex items-center justify-center w-11 h-10"><svg class="size-5" viewBox="0 0 20 20"><path d="M1.200 18.800l1.300-4.700a8.700 8.700 0 1 1 3.400 3.400z" fill="none" stroke="#a8d08a" stroke-width="1.600"/><path fill="#b5dc98" d="M6.700 5.500q.8-.8 1.400.2l.9 1.900q0 .6-.9 1.300 1 2 3.200 3 .8-1.200 1.400-1l1.900 1q.6.300.1 1.200-1.200 1.900-3.700 1.300-4.500-1.300-5.400-6-.1-1.800 1.100-2.900z"/></svg><i class="absolute bottom-[2px] size-[3px] rounded-full bg-[#e95420]"></i></div>
    <div class="relative flex items-center justify-center w-11 h-10"><svg class="size-[18px]" viewBox="0 0 18 18"><path d="M1 11.800L13 1.500M1 6.200l12 10.300" stroke="#1e8ad2" stroke-width="2.800"/><path fill="#30a9f2" d="M12.800 0L18 2.300v13.400L12.800 18z"/><path d="M12.900 5v8L7.600 9z" fill="#23151f"/></svg><i class="absolute bottom-[2px] left-[18px] size-[3px] rounded-full bg-[#e95420]"></i><i class="absolute bottom-[2px] left-[23px] size-[3px] rounded-full bg-[#e95420]"></i></div>
    <div class="relative flex items-center justify-center w-11 h-10"><div class="relative size-[18px] bg-gradient-to-br from-[#20d890] from-35% to-[#eaf060] to-75% flex items-center justify-center"><div class="size-[13px] bg-black text-white text-[8px] leading-[9px] font-bold text-center font-['Roboto',sans-serif]">PC<div class="ml-[2px] mt-px w-[5px] h-px bg-white"></div></div></div></div>
    <div class="relative flex items-center justify-center w-11 h-10"><div class="flex items-center justify-center w-9 h-9 rounded-[4px] bg-[#4b4048]"><svg class="size-5" viewBox="0 0 20 20"><circle cx="10" cy="10" r="10" fill="#31a852"/><path fill="#e13b2d" d="M10 10L1.340 5A10 10 0 0 1 18.660 5z"/><path fill="#fcc934" d="M10 5h8.660A10 10 0 0 1 10 20l4.500-8z"/><circle cx="10" cy="10" r="4.900" fill="#fff"/><circle cx="10" cy="10" r="3.900" fill="#1a73e8"/></svg></div><i class="absolute bottom-[2px] size-[3px] rounded-full bg-[#e95420]"></i></div>
    <div class="relative flex items-center justify-center w-11 h-10"><svg class="w-[18px] h-5" viewBox="0 0 18 20"><path fill="#f57900" d="M9 0l1.500 2 4 13.500h-11L7.500 2z"/><path fill="#ddd" d="M7 4h4l1 3.500H6zM5 11h8l1 3.500q-5 2-10 0z"/><path fill="#f79a10" d="M2 15h2q5 2.500 10 0h2l2 4.500H0z"/></svg></div>
    <div class="relative flex items-center justify-center w-11 h-10"><svg class="w-[19px] h-4" viewBox="0 0 19 16"><rect x=".5" y=".5" width="18" height="15" rx="1.500" fill="#454545" stroke="#5c5c5c"/><path d="M3 4l2 1.300L3 6.600M6 7.200h3.500" fill="none" stroke="#e5e5e5"/></svg></div>
    <div class="relative flex items-center justify-center w-11 h-10"><svg class="size-[18px]" viewBox="0 0 18 18"><circle cx="9" cy="9" r="9" fill="#2197d5"/><path fill="#fff" d="M3.500 9L14 4.800 12.300 13.600 9.500 11.500 8 13 7.500 10.500z"/></svg></div>
    <div class="relative flex items-center justify-center w-11 h-10"><svg class="w-4 h-5" viewBox="0 0 16 20"><rect width="16" height="20" rx="1.500" fill="#ececec"/><path d="M2 4.500h8M2 7.500h6M2 9.500h5M2 11.500h6" stroke="#aaa"/><rect x="9" y="7" width="5" height="5.500" fill="#ee3b45"/><path fill="#2d5f9f" d="M1 14.500h11l-1.500 4H2z"/><path d="M3 16h3M7 16h3" stroke="#cde"/></svg><i class="absolute bottom-[2px] size-[3px] rounded-full bg-[#e95420]"></i></div>
    <div class="relative flex items-center justify-center w-11 h-10"><div class="flex items-end justify-center w-4 h-5 rounded-[2px] border border-[#8a8a8a] bg-[#b4b4b4] text-[6.500px] leading-[9px] text-[#777]">SSD</div></div>
    <svg class="ml-auto size-[14px]" viewBox="0 0 14 14"><path fill="#f2f2f2" d="M0 0h3v3H0zM5.500 0h3v3h-3zM11 0h3v3h-3zM0 5.500h3v3H0zM5.500 5.500h3v3h-3zM11 5.500h3v3h-3zM0 11h3v3H0zM5.500 11h3v3h-3zM11 11h3v3h-3z"/></svg>
  </div>
</div>
<script>
  function fitLabels() {
    document.querySelectorAll('[data-w]').forEach(function (el) {
      el.style.letterSpacing = '0px';
      var range = document.createRange();
      range.selectNodeContents(el);
      var natural = range.getBoundingClientRect().width;
      el.style.letterSpacing = ((+el.dataset.w - natural) / el.textContent.length) + 'px';
    });
  }
  fitLabels();
  window.addEventListener('load', fitLabels);
  document.fonts.ready.then(fitLabels);
  new ResizeObserver(fitLabels).observe(document.body);
</script>
</body>
</html>
